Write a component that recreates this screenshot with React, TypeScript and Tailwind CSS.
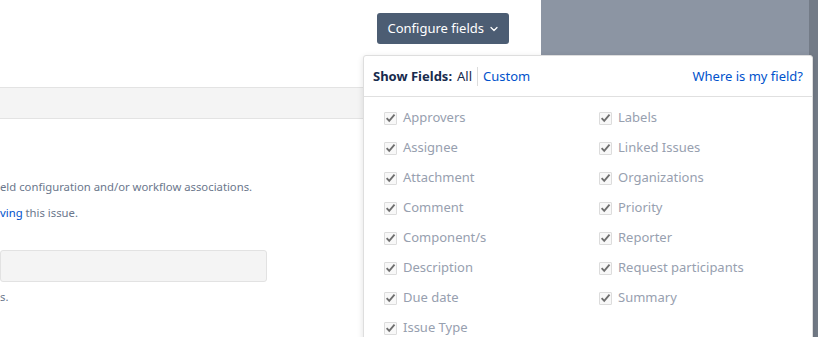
import { ChevronDown } from "lucide-react"

const leftFields = ["Approvers", "Assignee", "Attachment", "Comment", "Component/s", "Description", "Due date", "Issue Type"]
const rightFields = ["Labels", "Linked Issues", "Organizations", "Priority", "Reporter", "Request participants", "Summary"]

function FieldCheck({ label }: { label: string }) {
    return (
        <label className="flex items-center h-[30px] text-[13px] text-[#97a0af]">
            <span className="flex items-center justify-center w-[13px] h-[13px] border border-[#dcdcdc] bg-[#f8f8f8] mr-[6px] rounded-[1px]">
                <svg viewBox="0 0 12 12" className="w-[12px] h-[12px]">
                    <path d="M1.8 6.2 L4.6 9.2 L10.4 2.4" fill="none" stroke="#6f6f6f" strokeWidth="2" />
                </svg>
            </span>
            {label}
        </label>
    )
}

export default function App() {
    return (
        <div className="relative w-[818px] h-[337px] overflow-hidden bg-white font-['Noto_Sans',sans-serif]">
            {/* page behind */}
            <div className="flex h-full">
                <div className="w-[541px] flex flex-col">
                    <div className="h-[87px] flex items-start justify-end pt-[13px] pr-[32px]">
                        <button className="flex items-center gap-[4px] h-[31px] pl-[10px] pr-[9px] rounded-[3px] bg-[#4c5d73] text-white text-[13px]">
                            Configure fields
                            <ChevronDown size={12} strokeWidth={2.5} />
                        </button>
                    </div>
                    <div className="h-[32px] bg-[#f4f4f4] border-y border-[#e3e3e3]" />
                    <div className="pt-[55px] text-[11.3px] text-[#6b778c] leading-[26px]">
                        <p>eld configuration and/or workflow associations.</p>
                        <p>
                            <span className="text-[#0052cc]">ving</span> this issue.
                        </p>
                    </div>
                    <div className="mt-[24px] w-[267px] h-[32px] bg-[#f4f4f4] border border-[#e2e2e2] rounded-[3px]" />
                    <p className="mt-[7px] text-[11.3px] text-[#6b778c]">s.</p>
                </div>
                <div className="flex-1 bg-[#8c95a3]" />
                <div className="w-[9px] bg-[#737b87]" />
            </div>

            {/* dropdown */}
            <div className="absolute left-[363px] top-[55px] w-[450px] h-[300px] bg-white border border-[#dedede] rounded-[3px] shadow-[0_2px_6px_rgba(0,0,0,0.12)]">
                <div className="flex items-center justify-between h-[41px] pt-[1px] px-[9px] border-b border-[#e0e0e0] text-[13px]">
                    <div className="flex items-center">
                        <span className="font-bold text-[#172b4d]">Show Fields:</span>
                        <span className="ml-[5px] text-[#172b4d]">All</span>
                        <span className="mx-[5px] w-px h-[19px] bg-[#dcdcdc]" />
                        <span className="text-[#0052cc]">Custom</span>
                    </div>
                    <span className="text-[#0052cc]">Where is my field?</span>
                </div>
                <div className="grid grid-cols-2 pl-[20px] pt-[6px]">
                    <div className="flex flex-col">
                        {leftFields.map((f) => (
                            <FieldCheck key={f} label={f} />
                        ))}
                    </div>
                    <div className="flex flex-col ml-[1px]">
                        {rightFields.map((f) => (
                            <FieldCheck key={f} label={f} />
                        ))}
                    </div>
                </div>
            </div>
        </div>
    )
}
